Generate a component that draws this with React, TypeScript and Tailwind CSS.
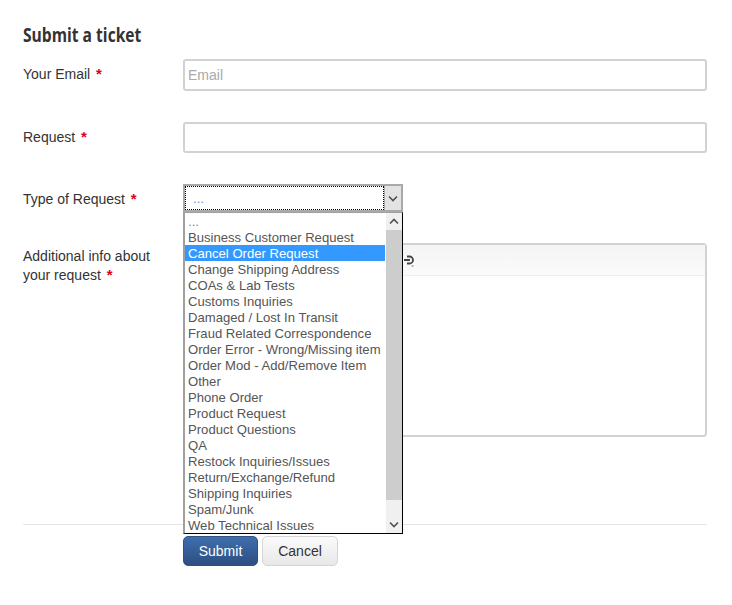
const requestTypes = [
  '...',
  'Business Customer Request',
  'Cancel Order Request',
  'Change Shipping Address',
  'COAs & Lab Tests',
  'Customs Inquiries',
  'Damaged / Lost In Transit',
  'Fraud Related Correspondence',
  'Order Error - Wrong/Missing item',
  'Order Mod - Add/Remove Item',
  'Other',
  'Phone Order',
  'Product Request',
  'Product Questions',
  'QA',
  'Restock Inquiries/Issues',
  'Return/Exchange/Refund',
  'Shipping Inquiries',
  'Spam/Junk',
  'Web Technical Issues',
];

function Chevron({ up = false }: { up?: boolean }) {
  return (
    <svg width="10" height="7" viewBox="0 0 10 7" fill="none">
      <path
        d={up ? 'M1 5.5 5 1.5 9 5.5' : 'M1 1.5 5 5.5 9 1.5'}
        stroke="#505050"
        strokeWidth="1.6"
      />
    </svg>
  );
}

function Required() {
  return <span className="ml-[2px] text-[15px] font-bold leading-none text-[#e2001a]">*</span>;
}

function Label({ children, className = 'pt-[6px]' }: { children: React.ReactNode; className?: string }) {
  return <label className={`w-[160px] shrink-0 pr-2 text-sm leading-[19px] text-[#333] ${className}`}>{children}</label>;
}

function RequestDropdown() {
  return (
    <div className="absolute left-0 top-[28px] z-10 flex h-[322px] w-[220px] border-t border-r border-b border-l-2 border-t-[#a0a0a0] border-r-black border-b-black border-l-[#a0a0a0] bg-white">
      <ul className="mr-[1px] w-[200px] whitespace-nowrap text-[13.1px] leading-[18px] text-[#555]">
        {requestTypes.map((type, i) => (
          <li
            key={type}
            className={`h-4 pl-[3px] ${i === 2 ? 'bg-[#3399ff] text-white' : ''} ${i === 0 ? 'text-[#5b8fc0]' : ''}`}
          >
            {type}
          </li>
        ))}
      </ul>
      <div className="flex w-[16px] flex-col bg-[#f0f0f0]">
        <div className="flex h-[17px] w-full items-center justify-center">
          <Chevron up />
        </div>
        <div className="h-[270px] w-full bg-[#cdcdcd]" />
        <div className="flex flex-1 items-end justify-center pb-[5px]">
          <Chevron />
        </div>
      </div>
    </div>
  );
}

export default function App() {
  return (
    <div className="min-h-[605px] bg-white pl-[23px] pr-[25px] pt-[22px] font-['Liberation_Sans',Arial,sans-serif]">
      <h1 className="h-[37px] origin-left scale-x-[0.78] whitespace-nowrap font-['Open_Sans',sans-serif] text-[20px] font-bold leading-[26px] text-[#333]">
        Submit a ticket
      </h1>

      <div className="flex flex-col gap-[31px]">
        <div className="flex">
          <Label>
            Your Email <Required />
          </Label>
          <input
            placeholder="Email"
            className="h-[32px] flex-1 rounded-[3px] border-2 border-[#d2d2d2] bg-white px-[3px] text-sm text-[#555] outline-none placeholder:text-[#aaa]"
          />
        </div>

        <div className="flex">
          <Label>
            Request <Required />
          </Label>
          <input className="h-[31px] flex-1 rounded-[3px] border-2 border-[#d2d2d2] bg-white outline-none" />
        </div>

        <div className="flex">
          <Label>
            Type of Request <Required />
          </Label>
          <div className="relative">
            <div className="flex h-[28px] w-[220px] border-2 border-[#a9a9a9] bg-white">
              <div className="flex-1 border border-dotted border-black pl-[7px] text-[13.1px] leading-[24px] text-[#5b8fc0]">...</div>
              <div className="flex w-[17px] items-center justify-center border-l border-[#a9a9a9] bg-[#e3e3e3]">
                <Chevron />
              </div>
            </div>
            <RequestDropdown />
          </div>
        </div>

        <div className="flex">
          <Label className="pt-[4px]">
            Additional info about your request <Required />
          </Label>
          <div className="h-[194px] flex-1 rounded-[4px] border-2 border-[#d2d2d2] bg-white">
            <div className="flex h-[31px] items-start border-b border-[#eeeeee] bg-gradient-to-b from-[#f4f4f4] to-[#fbfbfb] pl-[210px] pt-[8px]">
              <svg width="20" height="14" viewBox="0 0 20 14" fill="none">
                <path
                  d="M9 7h6M8 3.5H5.5a3.5 3.5 0 0 0 0 7H8M12 3.5h2.5a3.5 3.5 0 0 1 0 7H12"
                  stroke="#444"
                  strokeWidth="1.8"
                />
                <path d="M16 12.5h3l-1.5 1.5z" fill="#888" />
              </svg>
            </div>
          </div>
        </div>
      </div>

      <div className="mt-[87px] border-t border-[#e5e5e5] pl-[160px] pt-[11px]">
        <div className="flex gap-[4px]">
          <button className="h-[30px] w-[75px] rounded-[5px] border border-[#2f5286] bg-gradient-to-b from-[#3f6ead] to-[#2d4f82] text-sm text-white">
            Submit
          </button>
          <button className="h-[30px] w-[76px] rounded-[5px] border border-[#d5d5d5] bg-gradient-to-b from-[#fbfbfb] to-[#e8e8e8] text-sm text-[#333]">
            Cancel
          </button>
        </div>
      </div>
    </div>
  );
}
